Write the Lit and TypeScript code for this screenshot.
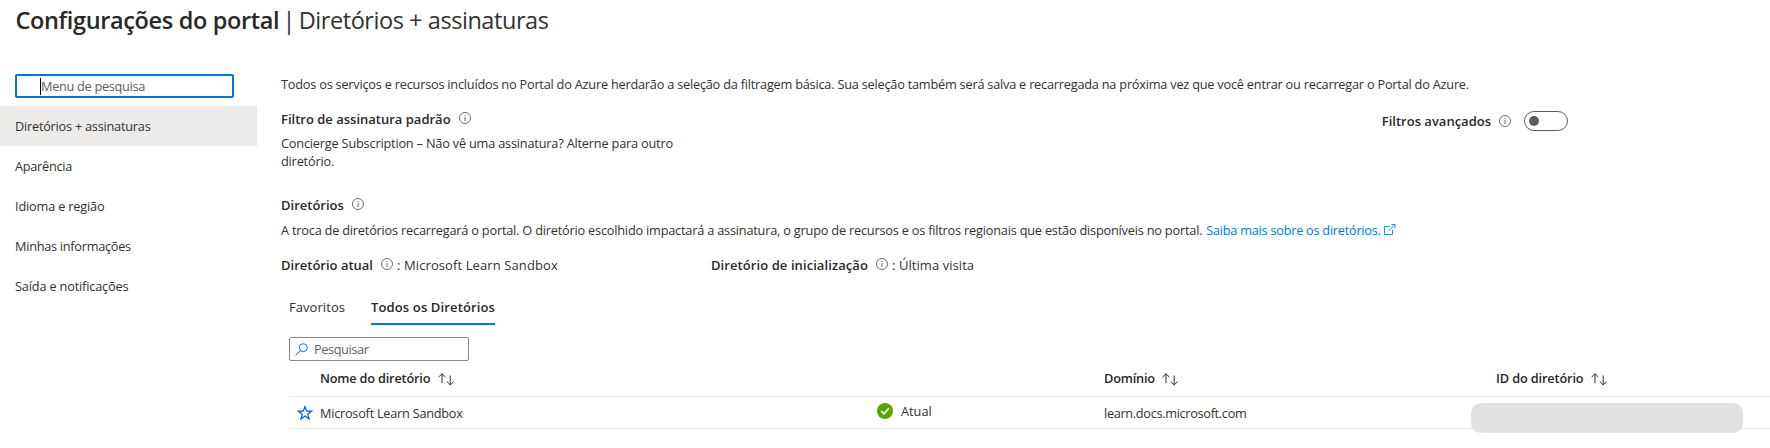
import { LitElement, html, css } from "lit";
import { customElement } from "lit/decorators.js";

const info = html`<svg class="info" viewBox="0 0 12 12" width="12" height="12">
  <circle cx="6" cy="6" r="5.5" fill="none" stroke="#605e5c" stroke-width="0.9"/>
  <path d="M6 5v4M6 3v1" stroke="#605e5c" stroke-width="0.9" fill="none"/>
</svg>`;

const sort = html`<svg class="sort" viewBox="0 0 16 13" width="16" height="13">
  <path d="M4 10.2V0.8M0.6 4.1L4 0.8L7.4 4.1M12.2 2.5V11.9M8.8 8.6L12.2 11.9L15.6 8.6" fill="none" stroke="#323130" stroke-width="1"/>
</svg>`;

const menu = [
  ["Diretórios + assinaturas", "m1"],
  ["Aparência", "m2"],
  ["Idioma e região", "m3"],
  ["Minhas informações", "m4"],
  ["Saída e notificações", "m5"],
];

@customElement("app-root")
export class AppRoot extends LitElement {
  static styles = css`
    :host { display: block; width: 1770px; height: 448px; overflow: hidden; background: #fff; color: #323130;
      font: 12.75px/18px "Open Sans", "Noto Sans", sans-serif; }
    * { box-sizing: border-box; }
    .t { white-space: nowrap; }
    svg { display: block; flex: none; }
    b { font-weight: 600; color: #292827; }
    .f1 { letter-spacing: -0.3px; }
    .m1 { letter-spacing: -0.24px; }
    .m2, .m4 { letter-spacing: -0.28px; }
    .m3, .m5 { letter-spacing: -0.18px; }
    .p1 { letter-spacing: -0.226px; }
    .p2 { letter-spacing: -0.2px; }
    .p3 { letter-spacing: -0.21px; }
    .p4 { letter-spacing: -0.26px; }
    .b1, .b2, .b3 { font-size: 13px; }
    .b5 { letter-spacing: 0.08px; }
    .c1 { letter-spacing: 0.1px; }
    .c2 { letter-spacing: 0.06px; }
    .t1 { letter-spacing: 0.06px; }
    .t2 { letter-spacing: 0.13px; }
    .f2 { letter-spacing: -0.4px; }
    .th1, .th2 { letter-spacing: -0.2px; }
    .th3 { letter-spacing: -0.14px; }
    .d1 { letter-spacing: -0.26px; }
    .d3 { letter-spacing: -0.33px; }
    .h1 { letter-spacing: -0.35px; }
    .h2 { letter-spacing: -0.44px; }
    header { height: 74px; padding: 4px 0 0 15.5px; font-size: 23.5px; line-height: 32px; display: flex; }
    .bar { width: 19.5px; text-align: center; }
    .cols { display: grid; grid-template-columns: 257px 1fr; column-gap: 24px; }
    .find { margin: 0 0 8px 15px; width: 219px; height: 24px; border: 2px solid #0078d4; border-radius: 2px; display: flex; align-items: center; padding-left: 23px; color: #605e5c; }
    .caret { width: 1px; height: 17px; background: #000; }
    .item { height: 40px; padding: 11px 0 0 15px; }
    .item.on { background: #edebe9; }
    main { padding-top: 1px; min-width: 0; }
    .row { display: flex; }
    .filters { margin-top: 17px; height: 60px; justify-content: space-between; }
    .left { width: 410px; }
    .left p { margin: 6px 0 0; }
    .lab { display: flex; gap: 8px; }
    .lab .info { margin-top: 2px; }
    .adv { display: flex; align-items: center; height: 20px; margin: 1px 202px 0 0; }
    .adv .info { margin: 0 13px 0 8px; }
    .toggle { width: 44px; height: 20px; border: 1px solid #605e5c; border-radius: 10px; padding: 4px; }
    .knob { width: 10px; height: 10px; border-radius: 50%; background: #605e5c; }
    .dirs { margin-top: 26px; }
    .desc { margin-top: 7px; }
    .link { color: #0078d4; display: flex; gap: 3px; margin-left: 4px; }
    .link svg { margin-top: 3px; }
    .cur { margin-top: 16px; font-size: 13px; line-height: 20px; }
    .cur > div { display: flex; width: 430px; }
    .cur .info { margin: 3px 4px 0 8px; }
    .tabs { margin: 22px 0 0 8px; gap: 26px; font-size: 13px; line-height: 20px; }
    .tab { height: 28px; }
    .tab.on { border-bottom: 2px solid #0078d4; }
    .q { margin: 12px 0 8px 8px; width: 180px; height: 24px; border: 1px solid #8a8886; border-radius: 2px; display: flex; align-items: center; padding-left: 5px; gap: 6px; color: #605e5c; }
    .tr { display: grid; grid-template-columns: 31px 557px 227px 392px 1fr; margin-left: 8px; border-bottom: 1px solid #edebe9; }
    .th { height: 28px; }
    .th > div { display: flex; gap: 7.5px; }
    .sort { margin-top: 4px; }
    .td { height: 32px; padding-top: 7px; }
    .star { margin: 1px 0 0 8px; }
    .ok { display: flex; gap: 8px; margin-top: -2px; }
    .ok svg { margin-top: 1px; }
    .mask { width: 272px; height: 30px; margin: -1px 0 0 -25px; border-radius: 10px; background: #e1e1e1; }
  `;

  render() {
    return html`
      <header><b class="t h1">Configurações do portal</b><span class="t bar">|</span><span class="t h2">Diretórios + assinaturas</span></header>
      <div class="cols">
        <nav>
          <div class="find"><span class="caret"></span><span class="t f1">Menu de pesquisa</span></div>
          ${menu.map(([m, c], i) => html`<div class="item ${i === 0 ? "on" : ""}"><span class="t ${c}">${m}</span></div>`)}
        </nav>
        <main>
          <div class="row"><span class="t p1">Todos os serviços e recursos incluídos no Portal do Azure herdarão a seleção da filtragem básica. Sua seleção também será salva e recarregada na próxima vez que você entrar ou recarregar o Portal do Azure.</span></div>
          <div class="row filters">
            <div class="left">
              <div class="lab"><b class="t b1">Filtro de assinatura padrão</b>${info}</div>
              <p><span class="t p2">Concierge Subscription – Não vê uma assinatura? Alterne para outro<br>diretório.</span></p>
            </div>
            <div class="adv"><b class="t b2">Filtros avançados</b>${info}<div class="toggle"><div class="knob"></div></div></div>
          </div>
          <div class="lab dirs"><b class="t b3">Diretórios</b>${info}</div>
          <div class="row desc"><span class="t p3">A troca de diretórios recarregará o portal. O diretório escolhido impactará a assinatura, o grupo de recursos e os filtros regionais que estão disponíveis no portal.</span>
            <span class="link"><span class="t p4">Saiba mais sobre os diretórios.</span>
              <svg viewBox="0 0 12 11" width="12" height="11"><path d="M5.5 2.5H0.5V10.5H8.5V6M7.5 0.5H11V4M11 0.5L4.5 7" fill="none" stroke="#0078d4" stroke-width="0.85"/></svg></span></div>
          <div class="row cur">
            <div><b class="t b4">Diretório atual</b>${info}<span class="t c1">: Microsoft Learn Sandbox</span></div>
            <div><b class="t b5">Diretório de inicialização</b>${info}<span class="t c2">: Última visita</span></div>
          </div>
          <div class="row tabs"><div class="tab"><span class="t t1">Favoritos</span></div><div class="tab on"><b class="t t2">Todos os Diretórios</b></div></div>
          <div class="q"><svg viewBox="0 0 13 13" width="13" height="13"><circle cx="8.3" cy="4.7" r="4" fill="none" stroke="#0078d4"/><path d="M5.4 7.6L0.6 12.4" stroke="#0078d4"/></svg><span class="t f2">Pesquisar</span></div>
          <div class="tr th"><span></span><div><b class="t th1">Nome do diretório</b>${sort}</div><span></span><div><b class="t th2">Domínio</b>${sort}</div><div><b class="t th3">ID do diretório</b>${sort}</div></div>
          <div class="tr td">
            <svg class="star" viewBox="0 0 16 16" width="16" height="16"><path d="M8 1.6L9.7 6.2H14.4L10.7 9.2L12.1 14L8 11.1L3.9 14L5.3 9.2L1.6 6.2H6.3Z" fill="none" stroke="#015cda" stroke-width="1.2"/></svg>
            <span class="t d1">Microsoft Learn Sandbox</span>
            <div class="ok"><svg viewBox="0 0 16 16" width="16" height="16"><circle cx="8" cy="8" r="8" fill="#57a300"/><path d="M4.2 8.2L6.9 10.8L11.9 5.3" fill="none" stroke="#fff" stroke-width="1.7"/></svg><span class="t d2">Atual</span></div>
            <span class="t d3">learn.docs.microsoft.com</span>
            <div class="mask"></div>
          </div>
        </main>
      </div>`;
  }
}
